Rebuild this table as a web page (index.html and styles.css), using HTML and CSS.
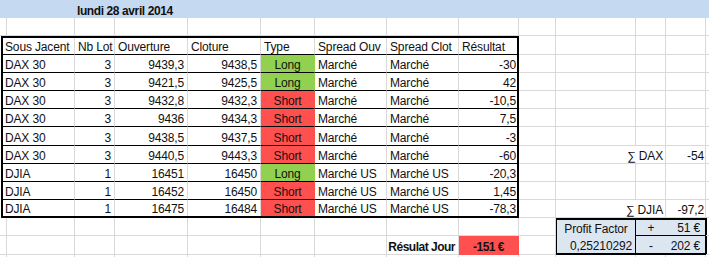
FILE: index.html
```html
<!DOCTYPE html>
<html lang="fr">
<head>
<meta charset="utf-8">
<title>lundi 28 avril 2014</title>
<link rel="stylesheet" href="styles.css">
</head>
<body>
<div class="sheet">
  <div class="title">lundi 28 avril 2014</div>

  <!-- row 2 -->
  <div class="c"></div><div class="c"></div><div class="c"></div><div class="c"></div><div class="c"></div><div class="c"></div><div class="c"></div><div class="c"></div><div class="c"></div><div class="c"></div><div class="c"></div><div class="c"></div><div class="c"></div><div class="c m"></div>

  <!-- trade table -->
  <div class="tbl">
    <div class="t">Sous Jacent</div><div class="t">Nb Lot</div><div class="t">Ouverture</div><div class="t">Cloture</div><div class="t">Type</div><div class="t">Spread Ouv</div><div class="t">Spread Clot</div><div class="t">Résultat</div>

    <div class="t">DAX 30</div><div class="t r">3</div><div class="t r">9439,3</div><div class="t r">9438,5</div><div class="t ctr long">Long</div><div class="t">Marché</div><div class="t">Marché</div><div class="t r">-30</div>
    <div class="t">DAX 30</div><div class="t r">3</div><div class="t r">9421,5</div><div class="t r">9425,5</div><div class="t ctr long">Long</div><div class="t">Marché</div><div class="t">Marché</div><div class="t r">42</div>
    <div class="t">DAX 30</div><div class="t r">3</div><div class="t r">9432,8</div><div class="t r">9432,3</div><div class="t ctr short">Short</div><div class="t">Marché</div><div class="t">Marché</div><div class="t r">-10,5</div>
    <div class="t">DAX 30</div><div class="t r">3</div><div class="t r">9436</div><div class="t r">9434,3</div><div class="t ctr short">Short</div><div class="t">Marché</div><div class="t">Marché</div><div class="t r">7,5</div>
    <div class="t">DAX 30</div><div class="t r">3</div><div class="t r">9438,5</div><div class="t r">9437,5</div><div class="t ctr short">Short</div><div class="t">Marché</div><div class="t">Marché</div><div class="t r">-3</div>
    <div class="t">DAX 30</div><div class="t r">3</div><div class="t r">9440,5</div><div class="t r">9443,3</div><div class="t ctr short">Short</div><div class="t">Marché</div><div class="t">Marché</div><div class="t r">-60</div>
    <div class="t">DJIA</div><div class="t r">1</div><div class="t r">16451</div><div class="t r">16450</div><div class="t ctr long">Long</div><div class="t">Marché US</div><div class="t">Marché US</div><div class="t r">-20,3</div>
    <div class="t">DJIA</div><div class="t r">1</div><div class="t r">16452</div><div class="t r">16450</div><div class="t ctr short">Short</div><div class="t">Marché US</div><div class="t">Marché US</div><div class="t r">1,45</div>
    <div class="t">DJIA</div><div class="t r">1</div><div class="t r">16475</div><div class="t r">16484</div><div class="t ctr short">Short</div><div class="t">Marché US</div><div class="t">Marché US</div><div class="t r">-78,3</div>
  </div>

  <!-- rows 3-8, columns I-M -->
  <div class="c"></div><div class="c"></div><div class="c"></div><div class="c"></div><div class="c m"></div>
  <div class="c"></div><div class="c"></div><div class="c"></div><div class="c"></div><div class="c m"></div>
  <div class="c"></div><div class="c"></div><div class="c"></div><div class="c"></div><div class="c m"></div>
  <div class="c"></div><div class="c"></div><div class="c"></div><div class="c"></div><div class="c m"></div>
  <div class="c"></div><div class="c"></div><div class="c"></div><div class="c"></div><div class="c m"></div>
  <div class="c"></div><div class="c"></div><div class="c"></div><div class="c"></div><div class="c m"></div>

  <!-- row 9 -->
  <div class="c"></div>
  <div class="c r sum sum-dax">∑ DAX</div>
  <div class="c r val">-54</div>
  <div class="c m"></div>

  <!-- rows 10-11 -->
  <div class="c"></div><div class="c"></div><div class="c"></div><div class="c"></div><div class="c m"></div>
  <div class="c"></div><div class="c"></div><div class="c"></div><div class="c"></div><div class="c m"></div>

  <!-- row 12 -->
  <div class="c"></div>
  <div class="c r sum sum-djia">∑ DJIA</div>
  <div class="c r val">-97,2</div>
  <div class="c m"></div>

  <!-- profit factor box -->
  <div class="pf">
    <div class="pc pc-left ctr">Profit Factor</div>
    <div class="pc pc-mid ctr pc-top">+</div>
    <div class="pc r pc-top pc-amt">51 €</div>
    <div class="pc pc-left r">0,25210292</div>
    <div class="pc ctr">-</div>
    <div class="pc r pc-amt">202 €</div>
  </div>

  <!-- row 13 -->
  <div class="c"></div><div class="c"></div><div class="c"></div><div class="c"></div><div class="c"></div><div class="c"></div><div class="c"></div><div class="c"></div><div class="c"></div><div class="c"></div><div class="c m"></div>

  <!-- row 14 -->
  <div class="c"></div><div class="c"></div><div class="c"></div><div class="c"></div><div class="c"></div><div class="c"></div><div class="c"></div>
  <div class="c r bold">Résulat Jour</div>
  <div class="c ctr bold total">-151 €</div>
  <div class="c"></div><div class="c m"></div>

  <!-- row 15 -->
  <div class="c"></div><div class="c"></div><div class="c"></div><div class="c"></div><div class="c"></div><div class="c"></div><div class="c"></div><div class="c"></div><div class="c"></div><div class="c"></div><div class="c"></div><div class="c"></div><div class="c"></div><div class="c m"></div>
</div>
</body>
</html>
```

FILE: styles.css
```css
* { box-sizing: border-box; }
html, body { margin: 0; padding: 0; background: #ffffff; }
body {
  font-family: "Liberation Sans", Arial, sans-serif;
  font-size: 12px;
  letter-spacing: -0.15px;
  color: #111111;
}
.sheet {
  display: grid;
  width: 709px;
  height: 257px;
  overflow: hidden;
  grid-template-columns: 2px 73px 40px 73px 73px 54px 72px 72px 60px 37px 80px 30px 40px 3px;
  grid-template-rows: repeat(15, 18.2px);
}
.title {
  grid-column: 1 / -1;
  grid-row: 1;
  background: #c5d9f1;
  font-weight: bold;
  font-size: 12px;
  letter-spacing: -0.4px;
  padding-left: 77px;
  display: flex;
  align-items: flex-end;
  line-height: 14px;
}
.c {
  border-right: 1px solid #d9d9d9;
  border-bottom: 1px solid #d9d9d9;
  display: flex;
  align-items: flex-end;
  padding: 0 3px;
  white-space: nowrap;
  line-height: 14px;
  min-width: 0;
}
.c.m { border-right: none; }
.r { justify-content: flex-end; }
.ctr { justify-content: center; }
.bold { font-weight: bold; font-size: 12px; letter-spacing: -0.5px; }
.sum { grid-column: 11 / 13; padding-right: 2px; }
.sum-dax { grid-row: 9; }
.sum-djia { grid-row: 12; }
.val { padding-right: 1px; }
.total {
  background: #ff5050;
  border-right-color: #ff5050;
  border-bottom-color: #ff5050;
}

.tbl {
  grid-column: 1 / 10;
  grid-row: 3 / 13;
  margin-left: 1px;
  border: 2px solid #000000;
  display: grid;
  grid-template-columns: 72px 40px 73px 73px 54px 72px 72px 58px;
  grid-template-rows: 16.2px repeat(8, 18.2px) 16.2px;
}
.t {
  border-right: 1px solid #d9d9d9;
  border-bottom: 1px solid #000000;
  display: flex;
  align-items: flex-end;
  padding: 0 3px;
  white-space: nowrap;
  line-height: 14px;
  min-width: 0;
}
.tbl > .t:nth-child(8n+1) { padding-left: 2px; }
.tbl > .t:nth-child(8n) { border-right: none; padding-right: 1px; }
.tbl > .t:nth-last-child(-n+8) { border-bottom: none; }
.long { background: #92d050; border-right-color: #92d050; }
.short { background: #ff5050; border-right-color: #ff5050; }

.pf {
  grid-column: 11 / 14;
  grid-row: 13 / 15;
  margin: 0 -1px;
  border: 2px solid #000000;
  background: #dce6f1;
  display: grid;
  grid-template-columns: 79px 30px 39px;
  grid-template-rows: 1fr 1fr;
}
.pc {
  display: flex;
  align-items: flex-end;
  padding: 0 3px;
  white-space: nowrap;
  line-height: 14px;
}
.pc-left { border-right: 1px solid #000000; }
.pc-top { border-bottom: 1px solid #000000; }
.pc-amt { padding-right: 5px; }
```
